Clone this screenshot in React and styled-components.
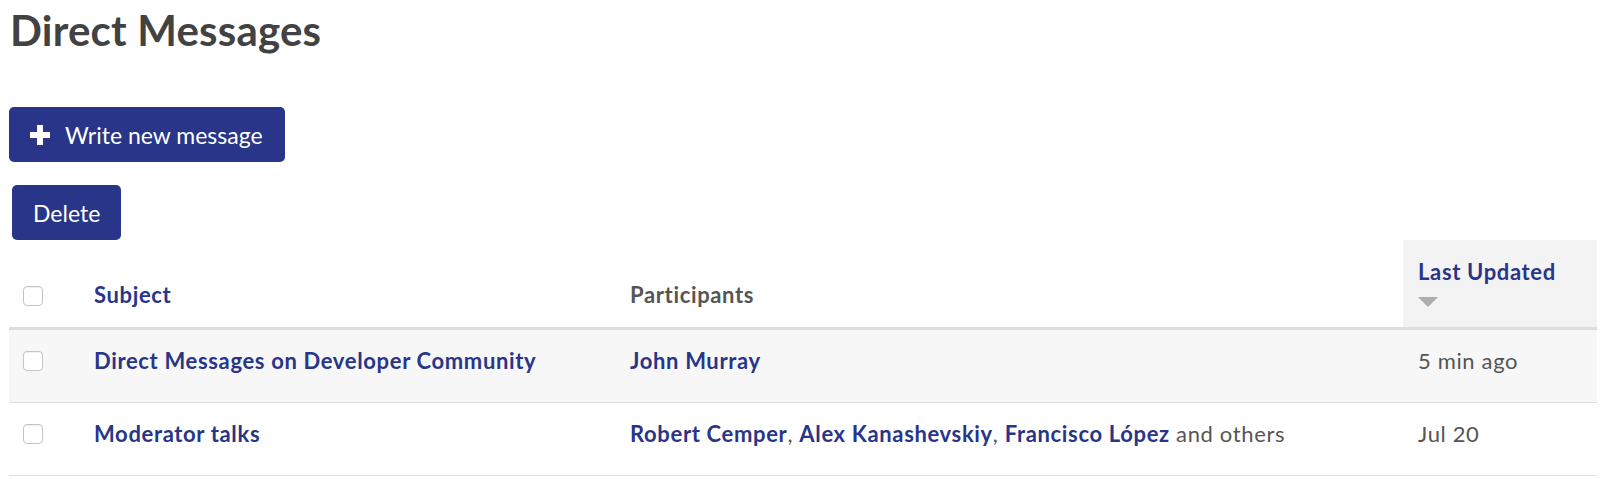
import React from "react";
import styled, { createGlobalStyle } from "styled-components";

const GlobalStyle = createGlobalStyle`
  body {
    margin: 0;
    background: #ffffff;
    font-family: Lato, "Noto Sans", sans-serif;
  }
`;

const Page = styled.div`
  padding: 0 3px 0 9px;
`;

const Title = styled.h1`
  margin: 6px 0 52px 1px;
  font-size: 42px;
  line-height: 49px;
  font-weight: 700;
  letter-spacing: 0.2px;
  color: #424242;
`;

const Button = styled.button`
  display: flex;
  align-items: center;
  gap: 14px;
  height: 55px;
  margin: 0 0 ${(p) => p.$mb || 0}px ${(p) => p.$ml || 0}px;
  padding: 0 ${(p) => p.$pr || 21}px 0 ${(p) => p.$pl || 21}px;
  border: none;
  border-radius: 5px;
  background: #283588;
  color: #ffffff;
  font-family: inherit;
  font-size: 23px;
  cursor: pointer;
`;

const Table = styled.table`
  width: 100%;
  border-collapse: collapse;
  font-size: 22px;
  letter-spacing: 0.65px;
`;

const HeadCell = styled.th`
  height: 66px;
  padding: 0 15px 20px;
  vertical-align: bottom;
  text-align: left;
  font-weight: 700;
  line-height: 24px;
  color: ${(p) => (p.$link ? "#283588" : "#555555")};
  background: ${(p) => (p.$sorted ? "#f3f3f3" : "transparent")};
  border-bottom: 3px solid #dddddd;
  width: ${(p) => p.$w || "auto"};
`;

const Row = styled.tr`
  background: ${(p) => (p.$shade ? "#f7f7f7" : "#ffffff")};
  border-bottom: 1px solid #dddddd;
`;

const Cell = styled.td`
  height: 62px;
  padding: 0 15px 10px;
  vertical-align: middle;
  line-height: 24px;
  color: #555555;
`;

const BoxCell = styled.td`
  width: 42px;
  height: 62px;
  padding: 0 14px 10px;
  vertical-align: middle;
`;

const BoxHead = styled(BoxCell).attrs({ as: "th" })`
  height: 66px;
  padding-bottom: 21px;
  vertical-align: bottom;
  border-bottom: 3px solid #dddddd;
`;

const Box = styled.span`
  display: block;
  width: 18px;
  height: 18px;
  border: 1px solid #c4c4c4;
  border-radius: 4px;
  background: #ffffff;
  box-shadow: inset 0 1px 1px rgba(0, 0, 0, 0.06);
`;

const Link = styled.a`
  color: #283588;
  font-weight: 700;
  text-decoration: none;
`;

const Arrow = styled.span`
  display: block;
  width: 0;
  height: 0;
  margin-top: 13px;
  border-left: 10px solid transparent;
  border-right: 10px solid transparent;
  border-top: 10px solid #adadad;
`;

const PlusIcon = () => (
  <svg width="22" height="22" viewBox="0 0 22 22">
    <path d="M8 1h6v7h7v6h-7v7H8v-7H1V8h7z" fill="#ffffff" />
  </svg>
);

const messages = [
  {
    subject: "Direct Messages on Developer Community",
    people: ["John Murray"],
    more: false,
    when: "5 min ago",
  },
  {
    subject: "Moderator talks",
    people: ["Robert Cemper", "Alex Kanashevskiy", "Francisco López"],
    more: true,
    when: "Jul 20",
  },
];

export default function App() {
  return (
    <Page>
      <GlobalStyle />
      <Title>Direct Messages</Title>
      <Button $pl={20} $pr={22} $mb={23}>
        <PlusIcon />
        Write new message
      </Button>
      <Button $ml={3}>Delete</Button>
      <Table>
        <thead>
          <tr>
            <BoxHead>
              <Box />
            </BoxHead>
            <HeadCell $link $w="506px">
              Subject
            </HeadCell>
            <HeadCell>Participants</HeadCell>
            <HeadCell $link $sorted $w="164px">
              Last Updated
              <Arrow />
            </HeadCell>
          </tr>
        </thead>
        <tbody>
          {messages.map((m, i) => (
            <Row key={m.subject} $shade={i === 0}>
              <BoxCell>
                <Box />
              </BoxCell>
              <Cell>
                <Link href="#">{m.subject}</Link>
              </Cell>
              <Cell>
                {m.people.map((p, j) => (
                  <React.Fragment key={p}>
                    {j > 0 && ", "}
                    <Link href="#">{p}</Link>
                  </React.Fragment>
                ))}
                {m.more && " and others"}
              </Cell>
              <Cell>{m.when}</Cell>
            </Row>
          ))}
        </tbody>
      </Table>
    </Page>
  );
}
